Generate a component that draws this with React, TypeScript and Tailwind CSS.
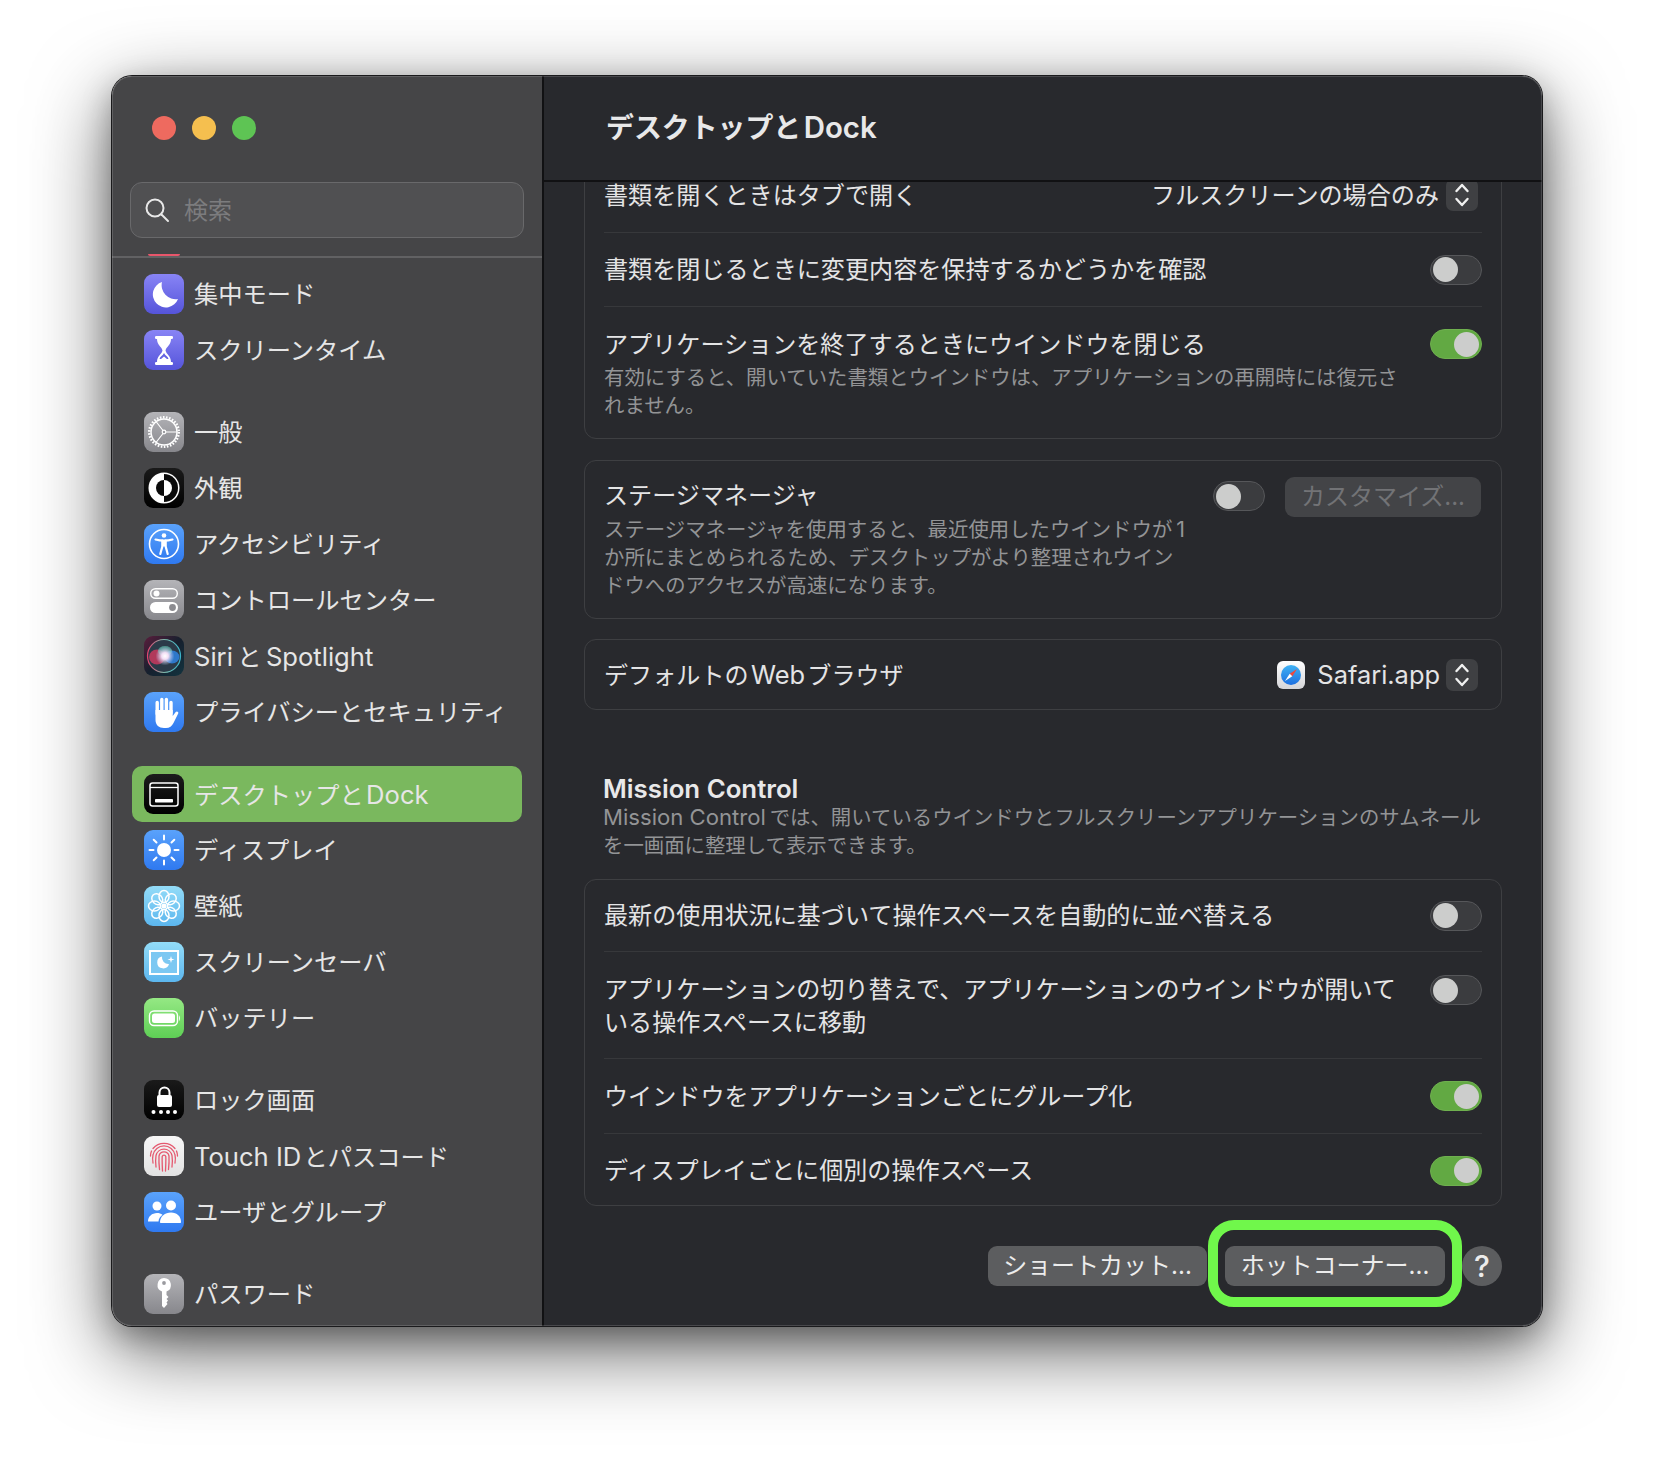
import React from 'react';

interface TileProps {
  id: string;
  from: string;
  to: string;
  children?: React.ReactNode;
}

// 40x40 rounded app tile with a vertical gradient
const Tile: React.FC<TileProps> = ({ id, from, to, children }) => (
  <svg width="40" height="40" viewBox="0 0 40 40" className="shrink-0">
    <defs>
      <linearGradient id={id} x1="0" y1="0" x2="0" y2="1">
        <stop offset="0" stopColor={from} />
        <stop offset="1" stopColor={to} />
      </linearGradient>
    </defs>
    <rect width="40" height="40" rx="9" fill={`url(#${id})`} />
    {children}
  </svg>
);

const BLUE: [string, string] = ['#5aa2fb', '#2f79f0'];
const PURPLE: [string, string] = ['#8884f5', '#5554da'];
const GRAY: [string, string] = ['#b4b4b8', '#87878c'];

const FocusIcon = () => (
  <Tile id="focus" from={PURPLE[0]} to={PURPLE[1]}>
    <path d="M18 8A13 13 0 1 0 34 25A14 14 0 0 1 18 8Z" fill="#fff" />
  </Tile>
);

const ScreenTimeIcon = () => (
  <Tile id="stime" from={PURPLE[0]} to={PURPLE[1]}>
    <rect x="11" y="6" width="18" height="3" rx="1.2" fill="#fff" />
    <rect x="11" y="32" width="18" height="3" rx="1.2" fill="#fff" />
    <path d="M13 9h14c0 6-4.500 7.500-5.500 11.500C22.500 24.500 27 26 27 32H13c0-6 4.500-7.500 5.500-11.500C17.500 16.500 13 15 13 9Z" fill="#fff" />
    <path d="M20 23c1.200 2.500 4 3.500 4.500 6h-9c.5-2.500 3.300-3.500 4.500-6Z" fill="#6462e2" />
    <path d="M20 26.500l3.500 3h-7Z" fill="#fff" />
  </Tile>
);

const GeneralIcon = () => (
  <Tile id="general" from={GRAY[0]} to={GRAY[1]}>
    <circle cx="20" cy="20" r="14.800" fill="none" stroke="#fff" strokeWidth="2.400" strokeDasharray="1.600 1.500" />
    <circle cx="20" cy="20" r="13" fill="none" stroke="#fff" strokeWidth="1.500" />
    <circle cx="20" cy="20" r="1.800" fill="none" stroke="#fff" strokeWidth="1.200" />
    <path d="M21.800 20H33M19 18.500L12 9.500M19 21.500L12 30.500" stroke="#fff" strokeWidth="1.200" />
  </Tile>
);

const AppearanceIcon = () => (
  <Tile id="appearance" from="#1a1a1a" to="#000000">
    <circle cx="20" cy="20" r="15.500" fill="#fff" />
    <path d="M20 6A14 14 0 0 1 20 34Z" fill="#0a0a0a" />
    <path d="M20 12A8 8 0 0 0 20 28Z" fill="#0a0a0a" />
    <path d="M20 12A8 8 0 0 1 20 28Z" fill="#fff" />
  </Tile>
);

const AccessibilityIcon = () => (
  <Tile id="access" from={BLUE[0]} to={BLUE[1]}>
    <circle cx="20" cy="20" r="14.500" fill="none" stroke="#fff" strokeWidth="1.600" />
    <circle cx="20" cy="11.500" r="2.300" fill="#fff" />
    <path d="M11.500 15.500c6 1.600 11 1.600 17 0" fill="none" stroke="#fff" strokeWidth="2.200" strokeLinecap="round" />
    <path d="M18.300 16.500v6l-2 7.500M21.700 16.500v6l2 7.500" fill="none" stroke="#fff" strokeWidth="2.200" strokeLinecap="round" />
    <rect x="18.300" y="16.500" width="3.400" height="6" fill="#fff" />
  </Tile>
);

const ControlCenterIcon = () => (
  <Tile id="control" from={GRAY[0]} to={GRAY[1]}>
    <rect x="6.700" y="8.700" width="26.600" height="9.600" rx="4.800" fill="none" stroke="#fff" strokeWidth="1.400" />
    <circle cx="12.500" cy="13.500" r="3" fill="#fff" />
    <rect x="6" y="22" width="28" height="11" rx="5.500" fill="#fff" />
    <circle cx="28.500" cy="27.500" r="3.400" fill="#8b8b90" />
  </Tile>
);

const SiriIcon = () => (
  <svg width="40" height="40" viewBox="0 0 40 40" className="shrink-0">
    <defs>
      <linearGradient id="siribg" x1="0" y1="0" x2="1" y2="1">
        <stop offset="0" stopColor="#5a1d3c" />
        <stop offset="0.500" stopColor="#16202e" />
        <stop offset="1" stopColor="#12333f" />
      </linearGradient>
      <radialGradient id="siricore">
        <stop offset="0" stopColor="#ffffff" />
        <stop offset="0.350" stopColor="#f4dff5" />
        <stop offset="1" stopColor="#b9c8f0" stopOpacity="0" />
      </radialGradient>
      <linearGradient id="siriring" x1="0" y1="0" x2="1" y2="0">
        <stop offset="0" stopColor="#e2446f" />
        <stop offset="0.500" stopColor="#7fb7a8" />
        <stop offset="1" stopColor="#3bb4c9" />
      </linearGradient>
    </defs>
    <rect width="40" height="40" rx="9" fill="url(#siribg)" />
    <circle cx="20" cy="20" r="16.500" fill="#2b3a48" stroke="url(#siriring)" strokeWidth="1.200" />
    <ellipse cx="13" cy="21" rx="8" ry="7.500" fill="#c9395f" opacity="0.850" />
    <ellipse cx="28" cy="21" rx="7.500" ry="6.500" fill="#2f7fd8" opacity="0.900" />
    <ellipse cx="21" cy="15" rx="7" ry="5" fill="#66c9b8" opacity="0.600" />
    <circle cx="21" cy="20" r="9.500" fill="url(#siricore)" />
  </svg>
);

const PrivacyIcon = () => (
  <Tile id="privacy" from={BLUE[0]} to={BLUE[1]}>
    <path d="M13.200 22V10.500M17.800 19V7.500M22.400 19V7.500M27 21V10.500" stroke="#fff" strokeWidth="3.400" strokeLinecap="round" />
    <path d="M11.500 18h17.200v6l3-4c1-1.400 3.200-.2 2.500 1.500L29.500 31c-1.500 3-4 5-7.500 5h-2c-5 0-8.500-3-8.500-8Z" fill="#fff" />
  </Tile>
);

const DesktopIcon = () => (
  <Tile id="desktop" from="#1c1c1c" to="#000000">
    <rect x="6" y="9" width="28" height="23" rx="2.500" fill="none" stroke="#fff" strokeWidth="1.500" />
    <path d="M6 13.500h28" stroke="#fff" strokeWidth="1.300" />
    <rect x="11" y="25" width="18" height="3.500" rx="0.800" fill="#fff" />
  </Tile>
);

const DisplayIcon = () => (
  <Tile id="display" from={BLUE[0]} to={BLUE[1]}>
    <circle cx="20" cy="20" r="7" fill="#fff" />
    <path d="M20 5.500v4M20 30.500v4M5.500 20h4M30.500 20h4M9.700 9.700l2.800 2.800M27.500 27.500l2.800 2.800M9.700 30.300l2.800-2.800M27.500 12.500l2.800-2.800" stroke="#fff" strokeWidth="2" strokeLinecap="round" />
  </Tile>
);

const WallpaperIcon = () => (
  <Tile id="wall" from="#93dcf8" to="#5cb6ee">
    {[0, 45, 90, 135, 180, 225, 270, 315].map((a) => (
      <ellipse key={a} cx="20" cy="10.500" rx="5" ry="6" fill="none" stroke="#fff" strokeWidth="1.500" transform={`rotate(${a} 20 20)`} />
    ))}
    <circle cx="20" cy="20" r="2.600" fill="#fff" />
  </Tile>
);

const ScreenSaverIcon = () => (
  <Tile id="saver" from="#93dcf8" to="#5cb6ee">
    <rect x="6" y="9" width="28" height="23" fill="#7cc8f2" stroke="#fff" strokeWidth="2" />
    <path d="M18 14.500A6 6 0 1 0 25 22A6.500 6.500 0 0 1 18 14.500Z" fill="#fff" />
    <path d="M27 14l.8 2.700 2.700.8-2.700.8-.8 2.700-.8-2.700-2.700-.8 2.700-.8Z" fill="#fff" />
  </Tile>
);

const BatteryIcon = () => (
  <Tile id="battery" from="#95e884" to="#5ecf55">
    <rect x="5.500" y="13" width="28" height="14.500" rx="4.500" fill="none" stroke="#fff" strokeWidth="1.400" />
    <rect x="8" y="15.500" width="23" height="9.500" rx="2.500" fill="#fff" />
    <path d="M35 17.500c1.200.4 1.200 5 0 5.400Z" fill="#fff" />
  </Tile>
);

const LockIcon = () => (
  <Tile id="lock" from="#1a1a1a" to="#000000">
    <path d="M15.500 16v-3.500a5 5 0 0 1 10 0V16" fill="none" stroke="#fff" strokeWidth="2" />
    <rect x="13" y="15" width="15" height="12" rx="2" fill="#fff" />
    {[9.500, 17, 24, 31].map((x) => (
      <circle key={x} cx={x} cy="32" r="2" fill="#fff" />
    ))}
  </Tile>
);

const TouchIdIcon = () => (
  <Tile id="touch" from="#f7f7f7" to="#e2e2e2">
    <g fill="none" stroke="#e5596f" strokeWidth="1.300" strokeLinecap="round">
      <path d="M9 12.500A14.500 14.500 0 0 1 31 12.500" />
      <path d="M6.500 20A13.500 13.500 0 0 1 7.500 15M33.500 20A13.500 13.500 0 0 0 32.500 15" />
      <path d="M9 27C8.500 24 8.500 21 9 19A11.200 11.200 0 0 1 31 19C31.500 21 31.500 24 31 27" />
      <path d="M12 31C11.500 27 11.500 23 12 19.500A8.200 8.200 0 0 1 28 19.500C28.500 23 28.500 27 28 31" />
      <path d="M15.500 33.500C15 29 14.800 24 15 20A5.100 5.100 0 0 1 25 20C25.200 24 25 29 24.500 33.500" />
      <path d="M18.500 35C18.300 30 18 25 18.200 20.500A1.900 1.900 0 0 1 21.800 20.500C22 25 21.700 30 21.500 35" />
    </g>
  </Tile>
);

const UsersIcon = () => (
  <Tile id="users" from={BLUE[0]} to={BLUE[1]}>
    <circle cx="13" cy="14" r="4.500" fill="#fff" />
    <circle cx="27" cy="13.500" r="5" fill="#fff" />
    <path d="M4 29.500c0-5 4-8.500 9-8.500 2.200 0 4 .6 5.500 1.700-2.300 1.700-3.800 4-4 6.800Z" fill="#fff" />
    <path d="M16 30c0-5.500 5-9.500 11-9.500S37 24.500 37 30c0 .6-.4 1-1 1H17c-.6 0-1-.4-1-1Z" fill="#fff" />
  </Tile>
);

const PasswordIcon = () => (
  <Tile id="pass" from={GRAY[0]} to={GRAY[1]}>
    <path d="M20 4a7 7 0 0 1 2.500 13.500V21l2 2-2 2 1.500 1.500-1.500 2 1 1.500L20 34l-2-2V17.500A7 7 0 0 1 20 4Z" fill="#fff" />
    <circle cx="20" cy="9" r="1.900" fill="#9a9a9f" />
  </Tile>
);

const SafariIcon = () => (
  <svg width="28" height="28" viewBox="0 0 28 28" className="shrink-0">
    <defs>
      <linearGradient id="safaribg" x1="0" y1="0" x2="0" y2="1">
        <stop offset="0" stopColor="#ffffff" />
        <stop offset="1" stopColor="#d5d5d8" />
      </linearGradient>
      <linearGradient id="safaridial" x1="0" y1="0" x2="0" y2="1">
        <stop offset="0" stopColor="#3fb2f4" />
        <stop offset="1" stopColor="#1d6fe0" />
      </linearGradient>
    </defs>
    <rect width="28" height="28" rx="6" fill="url(#safaribg)" />
    <circle cx="14" cy="14" r="10" fill="url(#safaridial)" />
    <path d="M20 8l-4.700 7.300-2.600-2.600Z" fill="#f0483e" />
    <path d="M8 20l4.700-7.300 2.600 2.600Z" fill="#fff" />
  </svg>
);

// Latin runs are drawn a little larger than the kana around them
const Latin: React.FC<{ children: React.ReactNode }> = ({ children }) => (
  <span className="text-[1.055em]">{children}</span>
);

const Toggle: React.FC<{ on?: boolean }> = ({ on = false }) => (
  <div
    className={`flex h-[30px] w-[52px] shrink-0 items-center rounded-full border px-[2px] ${
      on ? 'justify-end border-[#6fb04f] bg-[#62a943]' : 'justify-start border-[#56575a] bg-[#3b3c3f]'
    }`}
  >
    <div className="h-[25px] w-[25px] rounded-full bg-[#cccdcc]" />
  </div>
);

const Stepper = () => (
  <div className="flex h-[32px] w-[32px] shrink-0 items-center justify-center rounded-[7px] bg-[#3f4043]">
    <svg width="16" height="26" viewBox="0 0 16 26" fill="none" stroke="#f0f0f0" strokeWidth="2.400" strokeLinecap="round" strokeLinejoin="round">
      <path d="M2.500 9L8 3l5.500 6M2.500 17L8 23l5.500-6" />
    </svg>
  </div>
);

const sidebarGroups: { label: React.ReactNode; icon: React.ReactNode; active?: boolean }[][] = [
  [
    { label: '集中モード', icon: <FocusIcon /> },
    { label: 'スクリーンタイム', icon: <ScreenTimeIcon /> },
  ],
  [
    { label: '一般', icon: <GeneralIcon /> },
    { label: '外観', icon: <AppearanceIcon /> },
    { label: 'アクセシビリティ', icon: <AccessibilityIcon /> },
    { label: 'コントロールセンター', icon: <ControlCenterIcon /> },
    { label: <><Latin>Siri</Latin>&#8201;と&#8201;<Latin>Spotlight</Latin></>, icon: <SiriIcon /> },
    { label: 'プライバシーとセキュリティ', icon: <PrivacyIcon /> },
  ],
  [
    { label: <>デスクトップと<Latin>&#8202;Dock</Latin></>, icon: <DesktopIcon />, active: true },
    { label: 'ディスプレイ', icon: <DisplayIcon /> },
    { label: '壁紙', icon: <WallpaperIcon /> },
    { label: 'スクリーンセーバ', icon: <ScreenSaverIcon /> },
    { label: 'バッテリー', icon: <BatteryIcon /> },
  ],
  [
    { label: 'ロック画面', icon: <LockIcon /> },
    { label: <><Latin>Touch ID</Latin>&#8202;とパスコード</>, icon: <TouchIdIcon /> },
    { label: 'ユーザとグループ', icon: <UsersIcon /> },
  ],
  [{ label: 'パスワード', icon: <PasswordIcon /> }],
];

const Sidebar = () => (
  <aside className="flex w-[432px] shrink-0 flex-col overflow-hidden border-r-2 border-[#111113] bg-[#454547]">
    <div className="shrink-0 border-b-2 border-[#616163]">
      <div className="flex gap-[16px] pl-[40px] pt-[40px]">
        <div className="h-[24px] w-[24px] rounded-full bg-[#ee6a5f]" />
        <div className="h-[24px] w-[24px] rounded-full bg-[#f5bf4f]" />
        <div className="h-[24px] w-[24px] rounded-full bg-[#5ec454]" />
      </div>
      <div className="mx-[18px] mt-[42px] flex h-[56px] items-center gap-[14px] rounded-[12px] border border-[#69696b] bg-[#505052] pl-[13px]">
        <svg width="26" height="26" viewBox="0 0 26 26" fill="none" stroke="#e8e8e8" strokeWidth="2" strokeLinecap="round">
          <circle cx="11" cy="11" r="8.500" />
          <path d="M17.500 17.500L24 24" />
        </svg>
        <span className="pt-[2px] text-[24px] leading-[32px] text-[#7c7c7e]">検索</span>
      </div>
      <div className="ml-[36px] mt-[16px] h-[2px] w-[32px] rounded-b-[4px] bg-[#e8566b]" />
    </div>
    <nav className="flex flex-col gap-[26px] px-[20px] pt-[8px]">
      {sidebarGroups.map((group, i) => (
        <div key={i} className="flex flex-col">
          {group.map((item, j) => (
            <div
              key={j}
              className={`flex h-[56px] items-center gap-[10px] rounded-[10px] pl-[12px] ${item.active ? 'bg-[#7ab85e]' : ''}`}
            >
              {item.icon}
              <span className="whitespace-nowrap pt-[2px] text-[24.250px] leading-[32px] text-[#e6e6e6]">{item.label}</span>
            </div>
          ))}
        </div>
      ))}
    </nav>
  </aside>
);

const Row: React.FC<{ children: React.ReactNode; className?: string; last?: boolean }> = ({ children, className = '', last }) => (
  <div className={`flex justify-between ${last ? '' : 'border-b border-[#37383b]'} ${className}`}>{children}</div>
);

const RowText: React.FC<{ children: React.ReactNode }> = ({ children }) => (
  <span className="whitespace-nowrap text-[24.100px] leading-[33px] text-[#e4e4e5]">{children}</span>
);

const Description: React.FC<{ children: React.ReactNode; className?: string }> = ({ children, className = '' }) => (
  <p className={`whitespace-nowrap text-[20.400px] leading-[28px] text-[#939496] ${className}`}>{children}</p>
);

const Card: React.FC<{ children: React.ReactNode; className?: string }> = ({ children, className = '' }) => (
  <div className={`rounded-[12px] border border-[#3e3f42] px-[19px] ${className}`}>{children}</div>
);

const MainPanel = () => (
  <main className="flex min-w-0 flex-1 flex-col bg-[#28292d]">
    <header className="flex h-[106px] shrink-0 items-center border-b-2 border-[#111113] pb-[2px] pl-[62px]">
      <h1 className="whitespace-nowrap text-[27.900px] font-semibold leading-[36px] text-[#e8e8e9]">
        デスクトップと<Latin>&#8202;Dock</Latin>
      </h1>
    </header>

    <div className="flex-1 overflow-hidden pl-[40px] pr-[40px]">
      <div className="-mt-[23px]">
        <Card className="h-[280px]">
          <Row className="h-[73px] items-center pb-[2px]">
            <RowText>書類を開くときはタブで開く</RowText>
            <div className="flex items-center gap-[7px] pr-[4px]">
              <RowText>フルスクリーンの場合のみ</RowText>
              <Stepper />
            </div>
          </Row>
          <Row className="h-[74px] items-center">
            <RowText>書類を閉じるときに変更内容を保持するかどうかを確認</RowText>
            <Toggle />
          </Row>
          <Row last className="pt-[21px]">
            <div>
              <RowText>アプリケーションを終了するときにウインドウを閉じる</RowText>
              <Description className="mt-[3px]">
                有効にすると、開いていた書類とウインドウは、アプリケーションの再開時には復元さ
                <br />
                れません。
              </Description>
            </div>
            <div className="pt-[1px]">
              <Toggle on />
            </div>
          </Row>
        </Card>

        <Card className="mt-[21px] flex h-[159px] justify-between pt-[18px]">
          <div>
            <RowText>ステージマネージャ</RowText>
            <Description className="mt-[3px]">
              ステージマネージャを使用すると、最近使用したウインドウが<Latin>&#8201;1</Latin>
              <br />
              か所にまとめられるため、デスクトップがより整理されウイン
              <br />
              ドウへのアクセスが高速になります。
            </Description>
          </div>
          <div className="flex items-start gap-[20px] pr-[1px]">
            <div className="pt-[2px]">
              <Toggle />
            </div>
            <div className="-mt-[2px] flex h-[40px] w-[196px] items-center justify-center rounded-[9px] bg-[#434447] text-[24px] text-[#727376]">
              カスタマイズ...
            </div>
          </div>
        </Card>

        <Card className="mt-[20px] flex h-[71px] items-center justify-between">
          <RowText>
            デフォルトの<Latin>&#8202;Web&#8202;</Latin>ブラウザ
          </RowText>
          <div className="flex items-center gap-[12px] pr-[4px]">
            <SafariIcon />
            <div className="flex items-center gap-[6px]">
              <RowText>
                <Latin>Safari.app</Latin>
              </RowText>
              <Stepper />
            </div>
          </div>
        </Card>

        <div className="mt-[62px] px-[19px]">
          <h2 className="text-[25.800px] font-semibold leading-[33px] text-[#e8e8e9]">Mission Control</h2>
          <Description className="-mt-[2px]">
            <span className="text-[1.085em]">Mission Control</span>&#8201;では、開いているウインドウとフルスクリーンアプリケーションのサムネール
            <br />
            を一画面に整理して表示できます。
          </Description>
        </div>

        <Card className="mt-[19px]">
          <Row className="h-[72px] items-center">
            <RowText>最新の使用状況に基づいて操作スペースを自動的に並べ替える</RowText>
            <Toggle />
          </Row>
          <Row className="h-[107px] pt-[21px]">
            <RowText>
              アプリケーションの切り替えで、アプリケーションのウインドウが開いて
              <br />
              いる操作スペースに移動
            </RowText>
            <div className="pt-[2px]">
              <Toggle />
            </div>
          </Row>
          <Row className="h-[75px] items-center">
            <RowText>ウインドウをアプリケーションごとにグループ化</RowText>
            <Toggle on />
          </Row>
          <Row last className="h-[71px] items-center pt-[2px]">
            <RowText>ディスプレイごとに個別の操作スペース</RowText>
            <Toggle on />
          </Row>
        </Card>

        <div className="mt-[40px] flex items-center justify-end">
          <button className="flex h-[40px] w-[219px] items-center justify-center rounded-[9px] bg-[#5c5d5f] text-[24px] text-[#ececec]">
            ショートカット...
          </button>
          <div className="relative ml-[18px]">
            <button className="flex h-[40px] w-[220px] items-center justify-center rounded-[9px] bg-[#5c5d5f] text-[24px] text-[#ececec]">
              ホットコーナー...
            </button>
            <div className="absolute -inset-x-[17px] -bottom-[21px] -top-[26px] rounded-[26px] border-[10px] border-[#70f74b]" />
          </div>
          <button className="ml-[17px] flex h-[40px] w-[40px] items-center justify-center rounded-full bg-[#5c5d5f] text-[30px] font-medium text-[#ececec]">
            ?
          </button>
        </div>
      </div>
    </div>
  </main>
);

export default function App() {
  return (
    <div className="h-[1474px] w-[1654px] overflow-hidden bg-white pl-[112px] pt-[76px] font-['Inter','Noto_Sans_CJK_JP',sans-serif]">
      <div className="relative flex h-[1250px] w-[1430px] overflow-hidden rounded-[20px] shadow-[0_0_0_1px_#1a1a1c,0_24px_80px_rgba(0,0,0,0.62),0_10px_30px_rgba(0,0,0,0.28)]">
        <Sidebar />
        <MainPanel />
        {/* thin light edge around the window */}
        <div className="pointer-events-none absolute inset-0 rounded-[20px] border border-white/15" />
      </div>
    </div>
  );
}
